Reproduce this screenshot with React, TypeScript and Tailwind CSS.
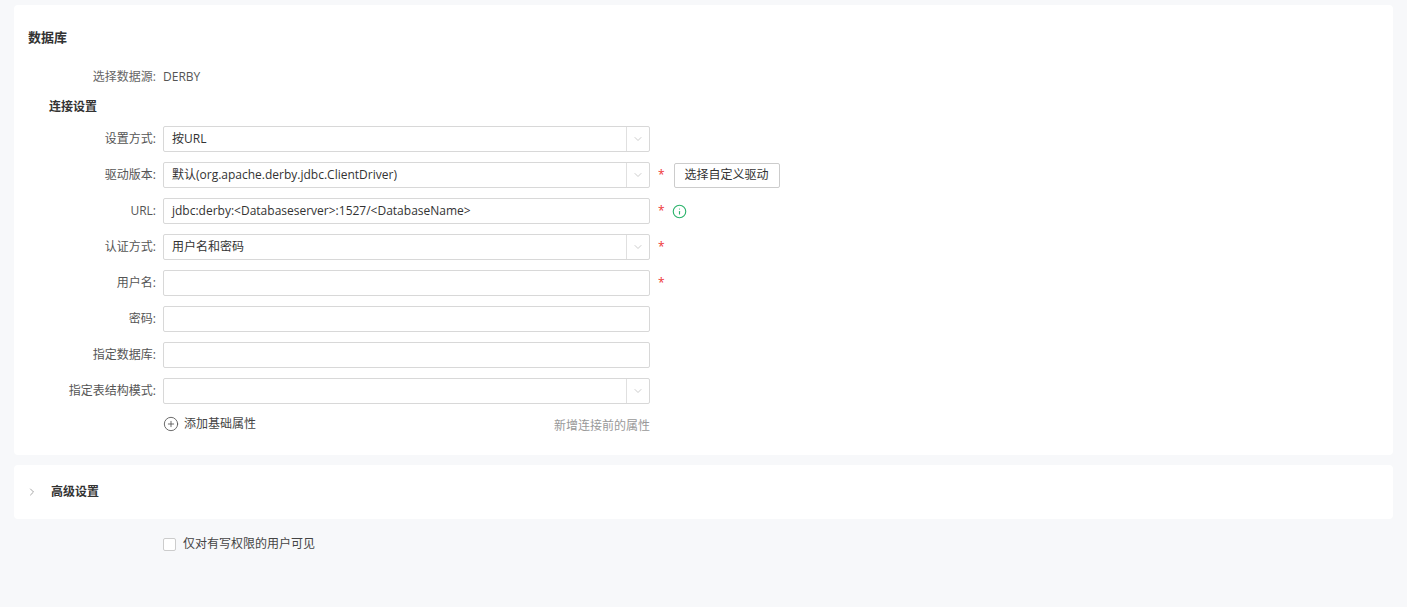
import { ChevronDown, ChevronRight, Info, CirclePlus } from 'lucide-react';

const font = { fontFamily: '"Open Sans", "Noto Sans CJK SC", sans-serif' };

function Row({ label, children, star, extra }: { label: string; children: React.ReactNode; star?: boolean; extra?: React.ReactNode }) {
  return (
    <div className="flex items-center h-[26px] mb-[10px]">
      <div className="w-[149px] text-right pr-[7px] text-[12px] text-[#555]">{label}:</div>
      <div className="w-[487px]">{children}</div>
      {star && <span className="ml-[8px] text-[#e33] text-[12px] leading-none">*</span>}
      {extra}
    </div>
  );
}

function Select({ value }: { value?: string }) {
  return (
    <div className="flex h-[26px] border border-[#d8d8d8] rounded-[2px] bg-white">
      <div className="flex-1 px-[8px] flex items-center text-[12px] text-[#333]">{value}</div>
      <div className="w-[23px] border-l border-[#e0e0e0] flex items-center justify-center">
        <ChevronDown className="w-[12px] h-[12px] text-[#bbb]" strokeWidth={1.5} />
      </div>
    </div>
  );
}

function Input({ value }: { value?: string }) {
  return (
    <div className="h-[26px] border border-[#d8d8d8] rounded-[2px] bg-white px-[8px] flex items-center text-[12px] text-[#333]">
      {value}
    </div>
  );
}

export default function App() {
  return (
    <div style={font} className="w-[1407px] h-[607px] bg-[#f7f8fa] pt-[5px] px-[14px] overflow-hidden">
      <div className="bg-white rounded-[4px] h-[450px] pl-[14px] pt-[22px]">
        <div className="text-[13px] font-bold text-[#333] h-[20px] leading-[20px]">数据库</div>
        <div className="flex items-center mt-[21px] h-[18px] text-[12px]">
          <div className="w-[135px] text-right pr-[7px] text-[#666]">选择数据源:</div>
          <div className="text-[#555]">DERBY</div>
        </div>
        <div className="text-[12px] font-bold text-[#333] ml-[21px] mt-[12px] h-[18px] leading-[18px]">连接设置</div>
        <div className="mt-[10px] -ml-[14px]">
          <Row label="设置方式"><Select value="按URL" /></Row>
          <Row
            label="驱动版本"
            star
            extra={
              <div className="ml-[9px] h-[25px] px-[10px] border border-[#ccc] rounded-[2px] flex items-center text-[12px] text-[#333]">
                选择自定义驱动
              </div>
            }
          >
            <Select value="默认(org.apache.derby.jdbc.ClientDriver)" />
          </Row>
          <Row label="URL" star extra={<Info className="ml-[7px] w-[15px] h-[15px] text-[#2bb36b]" strokeWidth={1.8} />}>
            <Input value="jdbc:derby:<Databaseserver>:1527/<DatabaseName>" />
          </Row>
          <Row label="认证方式" star><Select value="用户名和密码" /></Row>
          <Row label="用户名" star><Input /></Row>
          <Row label="密码"><Input /></Row>
          <Row label="指定数据库"><Input /></Row>
          <Row label="指定表结构模式"><Select /></Row>
          <div className="flex items-center ml-[149px] w-[487px] justify-between h-[20px]">
            <div className="flex items-center text-[12px] text-[#444]">
              <CirclePlus className="w-[16px] h-[16px] text-[#555] mr-[5px]" strokeWidth={1.3} />
              添加基础属性
            </div>
            <div className="text-[12px] text-[#999] mt-[4px]">新增连接前的属性</div>
          </div>
        </div>
      </div>
      <div className="bg-white rounded-[4px] h-[54px] mt-[10px] flex items-center pl-[12px]">
        <ChevronRight className="w-[12px] h-[12px] text-[#888]" strokeWidth={1.5} />
        <span className="ml-[13px] text-[12px] font-bold text-[#333]">高级设置</span>
      </div>
      <div className="flex items-center ml-[149px] mt-[16px] text-[12px] text-[#444]">
        <div className="w-[13px] h-[13px] border border-[#ccc] rounded-[2px] bg-white mr-[7px]" />
        仅对有写权限的用户可见
      </div>
    </div>
  );
}
